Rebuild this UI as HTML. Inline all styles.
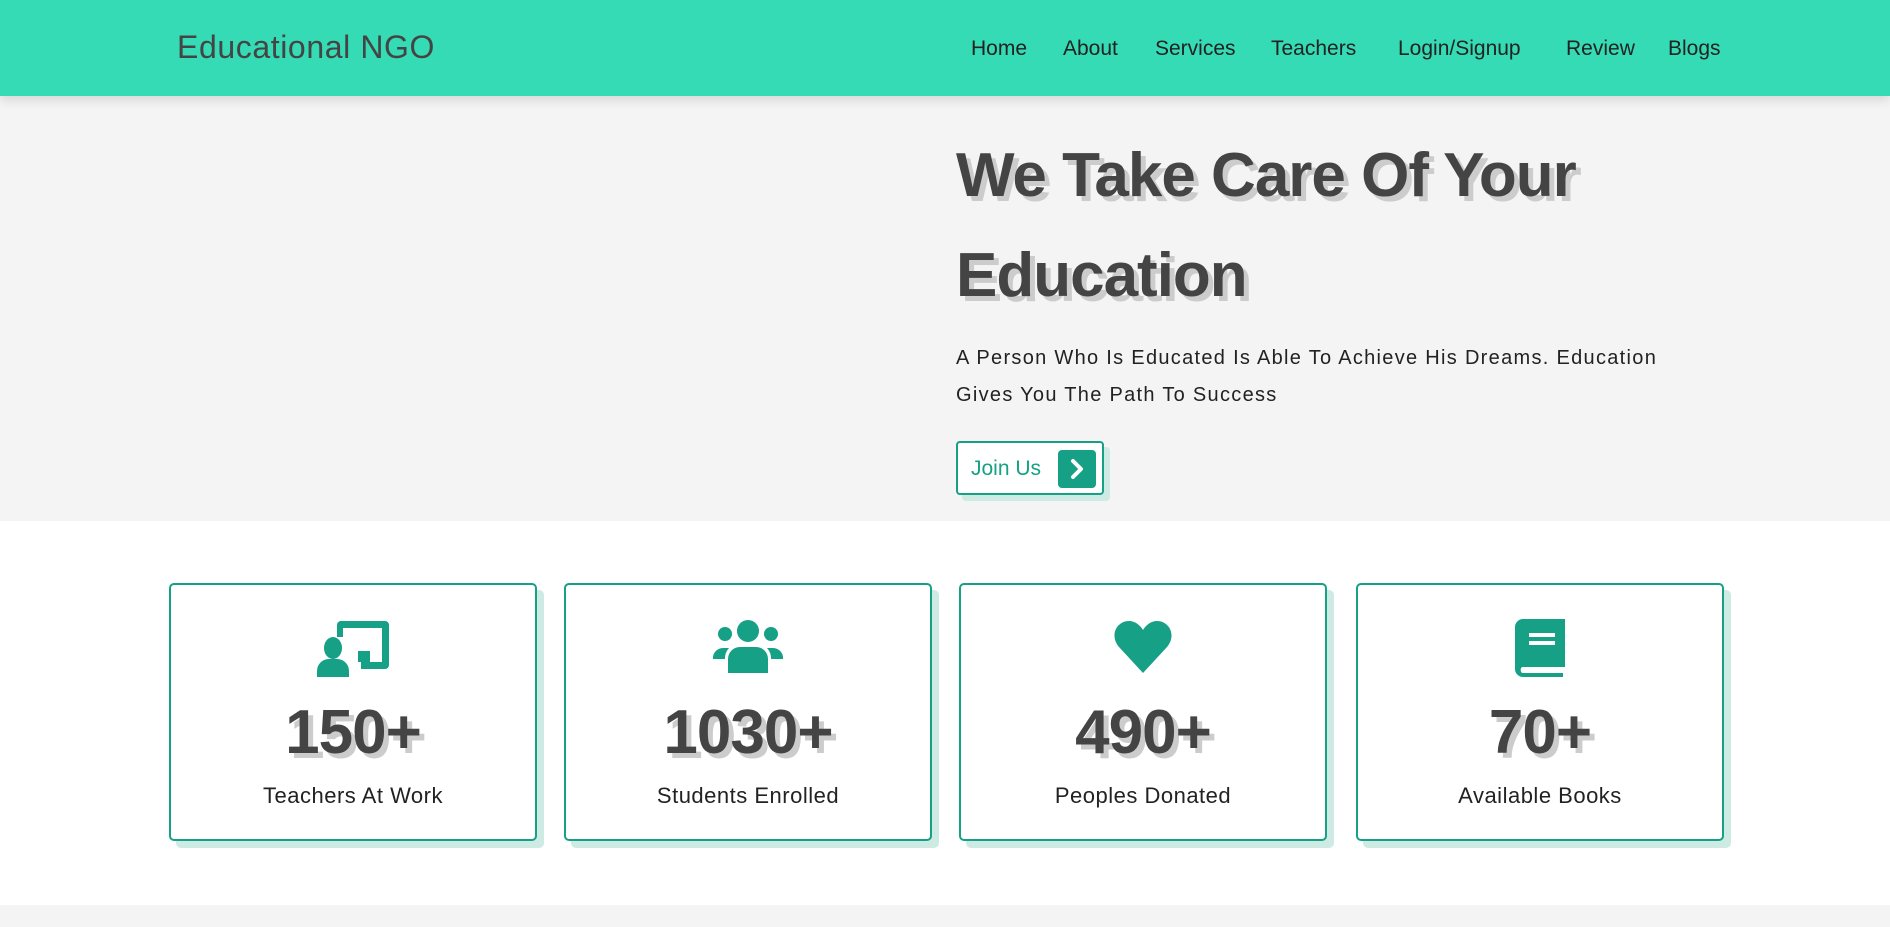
<!DOCTYPE html>
<html><head><meta charset="utf-8"><style>
*{margin:0;padding:0;box-sizing:border-box}
body{width:1890px;height:927px;overflow:hidden;background:#fff;font-family:"Liberation Sans",sans-serif;position:relative}
.nav{position:absolute;left:0;top:0;width:1890px;height:96px;background:#34dbb4;box-shadow:0 4px 10px rgba(0,0,0,.12);z-index:2}
.logo{position:absolute;left:177px;top:29px;font-size:32px;letter-spacing:0.6px;color:#444;}
.links{position:absolute;top:37px;font-size:21px;color:#222}
.links span{position:absolute;white-space:nowrap}
.hero{position:absolute;left:0;top:96px;width:1890px;height:425px;background:#f4f4f4}
h1{position:absolute;left:956px;top:126px;font-size:62px;line-height:100px;font-weight:bold;color:#444;text-shadow:5px 5px 0 #ccc;letter-spacing:-1px}
.p{position:absolute;left:956px;top:340px;font-size:20px;line-height:37px;color:#222;width:800px;letter-spacing:1.3px;white-space:nowrap}
.btn{position:absolute;left:956px;top:441px;width:148px;height:54px;border:2px solid #16a085;border-radius:4px;background:#fff;box-shadow:6px 6px 0 #cdeae3;color:#16a085;font-size:21px}
.btn .t{position:absolute;left:13px;top:14px}
.btn .a{position:absolute;left:100px;top:7px;width:38px;height:38px;background:#16a085;border-radius:4px}
.card{position:absolute;top:583px;width:368px;height:258px;border:2px solid #16a085;border-radius:5px;background:#fff;box-shadow:7px 7px 0 #cdeae3;text-align:center}
.card svg{position:absolute;left:50%;transform:translateX(-50%);top:34px}
.num{position:absolute;left:0;right:0;top:112px;font-size:62px;font-weight:bold;color:#444;text-shadow:5px 5px 0 #ccc;letter-spacing:-1px}
.lbl{position:absolute;left:0;right:0;top:198px;font-size:22px;letter-spacing:0.5px;color:#222}
.band{position:absolute;left:0;top:905px;width:1890px;height:22px;background:#f4f4f4}
</style></head><body>
<div class="nav"><div class="logo">Educational NGO</div>
<div class="links">
<span style="left:971px">Home</span><span style="left:1063px">About</span><span style="left:1155px">Services</span><span style="left:1271px">Teachers</span><span style="left:1398px">Login/Signup</span><span style="left:1566px">Review</span><span style="left:1668px">Blogs</span>
</div></div>
<div class="hero"></div>
<h1>We Take Care Of Your<br>Education</h1>
<div class="p">A Person Who Is Educated Is Able To Achieve His Dreams. Education<br>Gives You The Path To Success</div>
<div class="btn"><span class="t">Join Us</span><div class="a"><svg width="38" height="38" viewBox="0 0 38 38"><path d="M15 11 L23 19 L15 27" stroke="#fff" stroke-width="4" fill="none" stroke-linecap="round" stroke-linejoin="round"/></svg></div></div>

<div class="card" style="left:169px"><svg width="72" height="58" viewBox="0 0 72 58"><path d="M20 6a4 4 0 0 1 4-4h44a4 4 0 0 1 4 4v40a4 4 0 0 1-4 4H44v-7h21V9H26v9h-6z" fill="#16a085"/><rect x="41" y="32" width="12" height="11" fill="#16a085"/><ellipse cx="16" cy="29" rx="9" ry="11" fill="#16a085"/><path d="M0 58v-6a12 12 0 0 1 12-12h8a12 12 0 0 1 12 12v6z" fill="#16a085"/></svg><div class="num">150+</div><div class="lbl">Teachers At Work</div></div>
<div class="card" style="left:564px"><svg width="72" height="54" viewBox="0 0 72 54"><circle cx="36" cy="12" r="11" fill="#16a085"/><circle cx="13" cy="15" r="7" fill="#16a085"/><circle cx="59" cy="15" r="7" fill="#16a085"/><path d="M16 54v-14a12 12 0 0 1 12-12h16a12 12 0 0 1 12 12v14z" fill="#16a085"/><path d="M1 40a10 10 0 0 1 10-11h6a16 16 0 0 0-4 12v-1H1z" fill="#16a085"/><path d="M71 40a10 10 0 0 0-10-11h-6a16 16 0 0 1 4 12v-1h12z" fill="#16a085"/></svg><div class="num">1030+</div><div class="lbl">Students Enrolled</div></div>
<div class="card" style="left:959px"><svg width="60" height="56" viewBox="0 0 60 56"><path d="M30 54 L6 28 C-4 16 4 2 16 2 C22 2 27 6 30 11 C33 6 38 2 44 2 C56 2 64 16 54 28Z" fill="#16a085"/></svg><div class="num">490+</div><div class="lbl">Peoples Donated</div></div>
<div class="card" style="left:1356px"><svg width="50" height="58" viewBox="0 0 50 58"><path d="M8 0h42v48H7a4 4 0 0 0 0 6h41v4H8a8 8 0 0 1-8-8V8a8 8 0 0 1 8-8z" fill="#16a085"/><rect x="14" y="14" width="26" height="4" fill="#fff"/><rect x="14" y="22" width="26" height="4" fill="#fff"/></svg><div class="num">70+</div><div class="lbl">Available Books</div></div>
<div class="band"></div>
</body></html>
